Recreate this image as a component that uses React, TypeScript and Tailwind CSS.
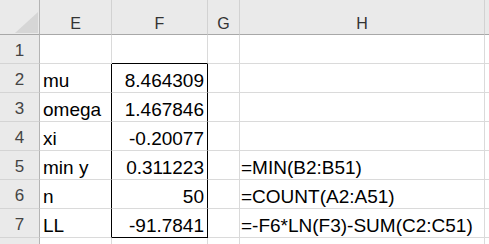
const cols = ['E', 'F', 'G', 'H'];

const rows: { n: number; label: string; value: string; formula: string }[] = [
  { n: 1, label: '', value: '', formula: '' },
  { n: 2, label: 'mu', value: '8.464309', formula: '' },
  { n: 3, label: 'omega', value: '1.467846', formula: '' },
  { n: 4, label: 'xi', value: '-0.20077', formula: '' },
  { n: 5, label: 'min y', value: '0.311223', formula: '=MIN(B2:B51)' },
  { n: 6, label: 'n', value: '50', formula: '=COUNT(A2:A51)' },
  { n: 7, label: 'LL', value: '-91.7841', formula: '=-F6*LN(F3)-SUM(C2:C51)' },
];

export default function App() {
  return (
    <div
      className="w-[489px] h-[244px] overflow-hidden bg-white text-black"
      style={{ fontFamily: '"Liberation Sans", Arial, sans-serif' }}
    >
      <div className="grid grid-cols-[40px_72px_96px_32px_245px_1fr] grid-rows-[35px_repeat(7,29px)_1fr] h-full">
        {/* Header row */}
        <div className="relative bg-[#eaeaea] border-r border-b border-[#b4b4b4] border-b-[#a8a8a8]">
          <svg className="absolute right-[1px] bottom-[1px]" width="23" height="21" viewBox="0 0 23 21">
            <polygon points="0,21 23,21 23,0" fill="#d6d6d6" />
          </svg>
        </div>
        {cols.map((c) => (
          <div
            key={c}
            className="flex items-end justify-center pb-[1px] bg-[#eaeaea] border-r border-[#d2d2d2] border-b border-b-[#a8a8a8] text-[16px] leading-[18px] text-[#333]"
          >
            {c}
          </div>
        ))}
        <div className="bg-[#eaeaea] border-b border-[#a8a8a8]" />

        {/* Data rows */}
        {rows.map((r) => {
          const boxed = r.n >= 2;
          return (
            <div key={r.n} className="contents">
              <div className="flex items-end justify-center pb-[3px] bg-[#eaeaea] border-r border-r-[#b4b4b4] border-b border-b-[#d4d4d4] text-[17px] leading-[18px] text-[#444]">
                {r.n}
              </div>
              <div
                className={`flex items-end pl-[3px] border-b border-b-[#dadada] border-r text-[19px] leading-[22px] whitespace-nowrap ${
                  boxed ? 'border-r-black' : 'border-r-[#dadada]'
                }`}
              >
                {r.label}
              </div>
              <div
                className={`flex items-end justify-end pr-[3px] border-r text-[19px] leading-[22px] whitespace-nowrap ${
                  boxed ? 'border-r-black' : 'border-r-[#dadada]'
                } border-b ${r.n === 1 || r.n === 7 ? 'border-b-black' : 'border-b-[#dadada]'}`}
              >
                {r.value}
              </div>
              <div className="border-r border-b border-[#dadada]" />
              <div className="flex items-end pl-[1px] border-r border-b border-[#dadada] text-[19px] leading-[22px] whitespace-nowrap">
                {r.formula}
              </div>
              <div className="border-b border-[#dadada]" />
            </div>
          );
        })}

        {/* Partial row below */}
        <div className="bg-[#eaeaea] border-r border-[#b4b4b4]" />
        <div className="border-r border-[#dadada]" />
        <div className="border-r border-[#dadada]" />
        <div className="border-r border-[#dadada]" />
        <div className="border-r border-[#dadada]" />
        <div />
      </div>
    </div>
  );
}
